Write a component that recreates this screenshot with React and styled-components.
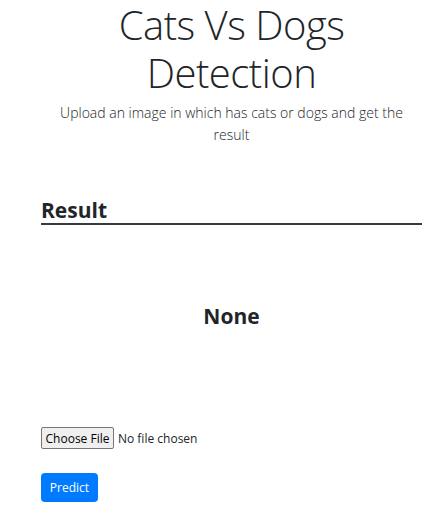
import React from 'react'
import styled, { createGlobalStyle } from 'styled-components'

const GlobalStyle = createGlobalStyle`
  body {
    margin: 0;
    background: #fff;
    color: #212529;
    font-family: "Open Sans", "Noto Sans", sans-serif;
  }
`

const Page = styled.div`
  width: 381px;
  margin-left: 41px;
  display: flex;
  flex-direction: column;
`

const Header = styled.header`
  text-align: center;
`

const Title = styled.h1`
  margin: 0;
  padding-top: 1px;
  font-size: 40px;
  line-height: 48px;
  font-weight: 300;
  letter-spacing: -0.5px;
`

const Lead = styled.p`
  margin: 5px 0 0;
  font-size: 14px;
  line-height: 22px;
  font-weight: 300;
`

const Section = styled.section`
  margin-top: 51px;
`

const SectionTitle = styled.h3`
  margin: 0;
  font-size: 21px;
  line-height: 26px;
  font-weight: 700;
  border-bottom: 2px solid #343a40;
`

const Outcome = styled.div`
  height: 182px;
  display: flex;
  align-items: center;
  justify-content: center;
  font-size: 21px;
  font-weight: 700;
`

const Form = styled.form`
  margin-top: 20px;
  display: flex;
  flex-direction: column;
  align-items: flex-start;
  gap: 24px;
`

const FileInput = styled.input`
  font-family: "Open Sans", sans-serif;
  font-size: 12px;
  color: #212529;

  &::file-selector-button {
    height: 22px;
    width: 73px;
    margin-right: 4px;
    padding: 0;
    font-family: "Open Sans", sans-serif;
    font-size: 12px;
    color: #000;
    background: #efefef;
    border: 1px solid #767676;
    border-radius: 2px;
  }
`

const Button = styled.button`
  width: 57px;
  height: 29px;
  border: none;
  border-radius: 4px;
  background: #007bff;
  color: #fff;
  font-family: "Open Sans", sans-serif;
  font-size: 12px;
  padding: 0;
`

export default function App() {
  return (
    <>
      <GlobalStyle />
      <Page>
        <Header>
          <Title>Cats Vs Dogs Detection</Title>
          <Lead>Upload an image in which has cats or dogs and get the result</Lead>
        </Header>
        <Section>
          <SectionTitle>Result</SectionTitle>
          <Outcome>None</Outcome>
        </Section>
        <Form onSubmit={(e) => e.preventDefault()}>
          <FileInput type="file" />
          <Button type="submit">Predict</Button>
        </Form>
      </Page>
    </>
  )
}
